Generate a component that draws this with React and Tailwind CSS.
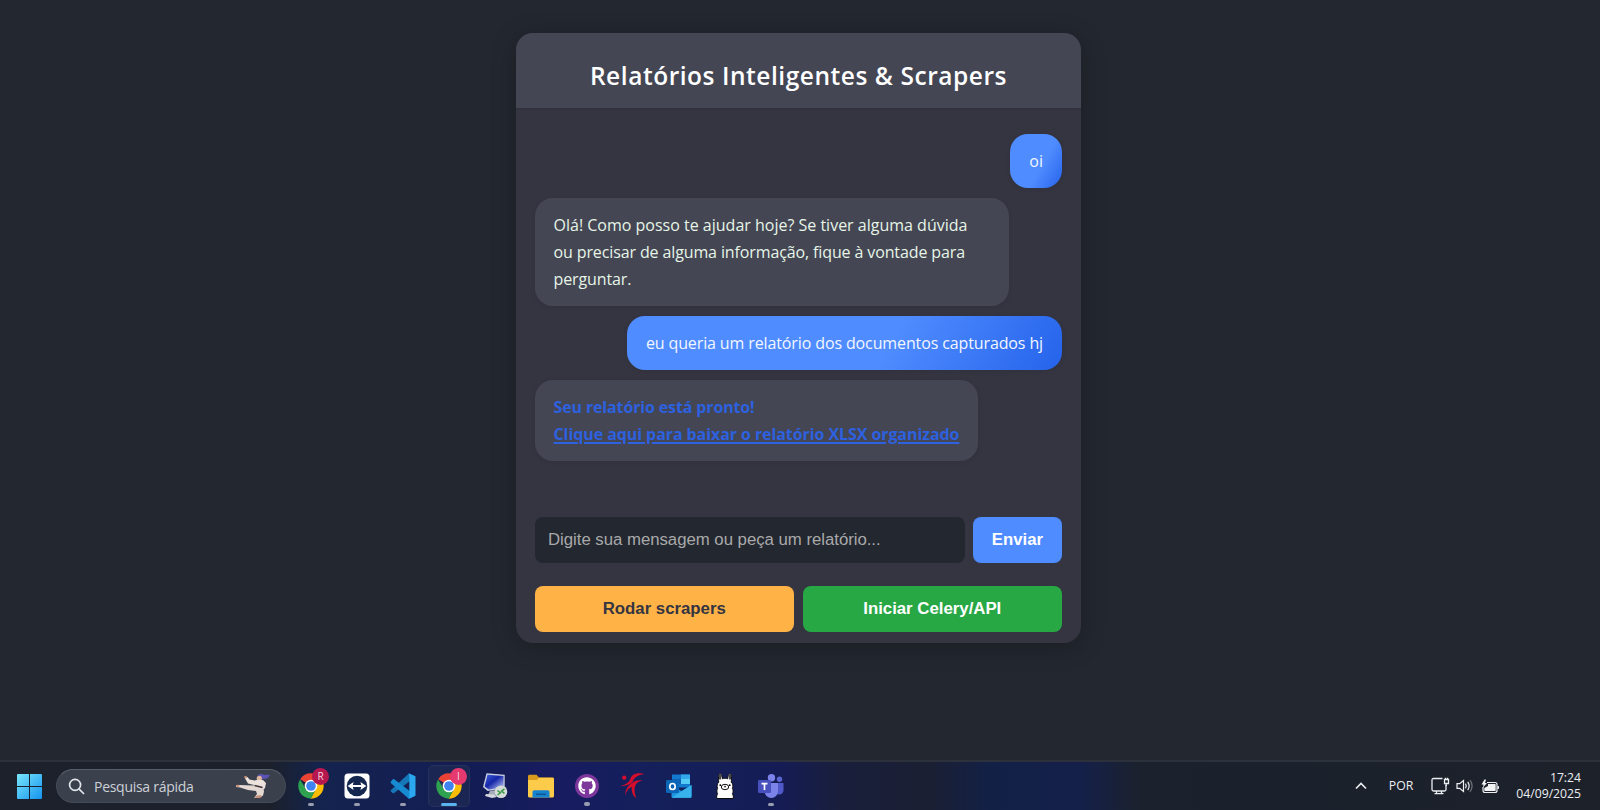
import React from "react";
import { FaGithub } from "react-icons/fa";

function Chrome({ letter, badge }) {
  return (
    <div className="relative h-[26px] w-[26px]">
      <svg viewBox="0 0 26 26" className="h-[26px] w-[26px]">
        <path d="M13 13 2.2 6.2A12.7 12.7 0 0 1 24.3 7.2H13Z" fill="#ea4335" />
        <path d="M24.3 7.2A12.7 12.7 0 0 1 12.6 25.7L18 15.8 13 7.2Z" fill="#fbbc04" />
        <path d="M2 6.6A12.7 12.7 0 0 0 12.6 25.7L18 16 8 16Z" fill="#2fa24f" />
        <circle cx="13" cy="13" r="6.3" fill="#fff" />
        <circle cx="13" cy="13" r="4.8" fill="#3f83f0" />
      </svg>
      <span className={`absolute -top-[5px] left-[14px] flex h-[17px] w-[17px] items-center justify-center rounded-full text-[10px] text-[#f7d3df] ${badge}`}>
        {letter}
      </span>
    </div>
  );
}

function TeamViewer() {
  return (
    <svg viewBox="0 0 26 26" className="h-[26px] w-[26px]">
      <rect x=".5" y=".5" width="25" height="25" rx="3.5" fill="#fff" />
      <circle cx="13" cy="13" r="10.3" fill="#14284f" />
      <path d="m3.6 13 6-4-.8 2.9h8.4L16.4 9l6 4-6 4 .8-2.9H8.8l.8 2.9Z" fill="#fff" />
    </svg>
  );
}

function VsCode() {
  return (
    <svg viewBox="0 0 26 26" className="h-[26px] w-[26px]">
      <path d="M.7 17.2 18.6.8 20 1.2V8L3.8 20.3 3 20.2.8 18.4Z" fill="#1677b8" />
      <path d="M.7 8.800 3.1 6.1l.8-.1L20 18.2v6.6l-1.5.6L.8 10Z" fill="#168bd1" />
      <path d="M19.3.5 25.5 3.2v19.6l-6.2 2.9-.9-.4.9-1.300V2.2l-.9-1.400Z" fill="#2aa7ee" />
    </svg>
  );
}

function RemoteDesktop() {
  return (
    <svg viewBox="0 0 26 26" className="h-[26px] w-[26px]">
      <defs>
        <linearGradient id="screen" x1="0" y1="0" x2="1" y2="1">
          <stop offset="0" stopColor="#3f60dc" />
          <stop offset=".45" stopColor="#1526a8" />
          <stop offset="1" stopColor="#c3d0f6" />
        </linearGradient>
      </defs>
      <path d="m8 18 6-1 1 5-5 2-4-2Z" fill="#a6adba" />
      <path d="m4 21 8 .5 3 2.5-5 1-7-2Z" fill="#d2d6dd" />
      <path d="m4.500.2 18.200 1.500v13.500l-17 2.800L1 14Z" fill="#c9d0df" />
      <path d="m5.500 1.700 16 1.300v11.200L6.600 16.500l-4-3Z" fill="url(#screen)" />
      <circle cx="19" cy="18.800" r="6.300" fill="#d5dbd6" />
      <path d="m15.500 17.500 3 2.300-3 2.200M22.500 15.800l-3 2.300 3 2.300" fill="none" stroke="#3a9a48" strokeWidth="1.5" />
    </svg>
  );
}

function Folder() {
  return (
    <svg viewBox="0 0 26 26" className="h-[26px] w-[26px]">
      <path d="M0 3.200C0 2.300.6 1.700 1.500 1.700h7L11 4.500h13.500c.9 0 1.500.6 1.500 1.500v8H0Z" fill="#d99a1d" />
      <path d="M0 7h9l2-2.300h13.500c.9 0 1.500.6 1.500 1.500V23c0 .9-.6 1.500-1.500 1.500h-23C.6 24.500 0 23.900 0 23Z" fill="#fccb4a" />
      <path d="M4.500 24.500V19c0-1 .8-1.800 1.800-1.800h13.400c1 0 1.800.8 1.800 1.800v5.500Z" fill="#1683d0" />
      <path d="M8 20.500h10v1.500H8Z" fill="#0e5793" />
    </svg>
  );
}

function GitHubDesktop() {
  return (
    <div className="flex h-6 w-6 items-center justify-center rounded-full bg-[#7c369c]">
      <FaGithub className="h-[18px] w-[18px] text-white" />
    </div>
  );
}

function RedFigure() {
  return (
    <svg viewBox="0 0 26 26" className="h-[26px] w-[26px]" fill="#d50d2c">
      <circle cx="4.200" cy="4.600" r="2.200" />
      <path d="M24.500 1C18-.8 12 1 10.500 5.500 9.500 8.800 7.500 10.800.5 13.200c7.500-.7 10.500-2 12.300-4.700C14.200 4.500 17.500 2 24.500 1Z" />
      <path d="M22.500 7.600c-4.500-.8-8 .2-10 2.200C8 12.500 5.500 16 5 22.500 7 17.500 8.500 15 11.700 14c-.2 5 1 8.800 4.800 11.300-2-4-2.500-8.300-1.400-12.300C16.500 9.800 18.500 8.200 22.500 7.600Z" />
    </svg>
  );
}

function Outlook() {
  return (
    <svg viewBox="0 0 26 26" className="h-[26px] w-[26px]">
      <path d="M6 1.500h18v13H6Z" fill="#1279ce" />
      <path d="M15 1.500h9V6h-9Z" fill="#31a9ea" />
      <path d="M15 6h9v5h-9Z" fill="#53cbf4" />
      <path d="M6 6h9v5H6Z" fill="#0d62b5" />
      <path d="M5.500 12 15.500 18 25.500 12v11.500c0 .8-.5 1.300-1.300 1.300H6.800c-.8 0-1.300-.5-1.300-1.300Z" fill="#1b96df" />
      <path d="M25.500 12 6 24.500c.3.200.5.300.8.300h17.400c.8 0 1.300-.5 1.300-1.300Z" fill="#38b2ed" />
      <rect x="0" y="7" width="13" height="13" rx="1.300" fill="#0c66b8" />
      <ellipse cx="6.500" cy="13.500" rx="2.700" ry="3" fill="none" stroke="#fff" strokeWidth="1.700" />
    </svg>
  );
}

function Llama() {
  return (
    <svg viewBox="0 0 26 26" className="h-[26px] w-[26px]">
      <path
        d="M4.800 25.500c-.5-2 .2-3.600.8-4.800-1-1.700-1-3.700 0-5.200-1-2.500-.5-5 1.200-6.300C6.200 5.500 6.300 1 8 .800c1.600 0 2 2.700 2.300 5 1.700-.9 3.700-.9 5.400 0 .3-2.300.7-5 2.300-5 1.700.2 1.800 4.700 1.200 8.400 1.700 1.300 2.200 3.800 1.200 6.300 1 1.500 1 3.500 0 5.200.6 1.200 1.300 2.800.8 4.800Z"
        fill="#fff"
        stroke="#0b0b0b"
        strokeWidth="1"
      />
      <path d="M8 2v4.500M18 2v4.500" stroke="#111" strokeWidth="1.500" />
      <ellipse cx="13" cy="14" rx="3.700" ry="2.700" fill="none" stroke="#111" strokeWidth="1" />
      <circle cx="8.300" cy="12.200" r=".9" />
      <circle cx="17.700" cy="12.200" r=".9" />
      <path d="m12 13 1 .7 1-.7M13 13.700v1" fill="none" stroke="#111" strokeWidth=".8" />
    </svg>
  );
}

function Teams() {
  return (
    <svg viewBox="0 0 26 26" className="h-[26px] w-[26px]">
      <circle cx="21.500" cy="6.300" r="2.700" fill="#5b65cf" />
      <circle cx="13.500" cy="4.700" r="3.700" fill="#7b83eb" />
      <path d="M17 10h7.500c.6 0 1 .4 1 1v6.500a4.500 4.500 0 0 1-8.500 1.500Z" fill="#5059c9" />
      <path d="M7.500 10H19c.6 0 1 .4 1 1v7.300a6.700 6.700 0 0 1-13.400 0V11c0-.6.3-1 .9-1Z" fill="#7b83eb" />
      <rect x="0" y="7" width="13" height="13" rx="1.300" fill="#4750bd" />
      <path d="M3.500 10.700h6M6.500 10.700v6.200" stroke="#fff" strokeWidth="1.700" />
    </svg>
  );
}

function Karateka() {
  return (
    <svg viewBox="0 0 36 26" className="h-[26px] w-9">
      <path d="M22.500 3c2-3 5-2 7-1 2-.3 3.500-.5 5.500.3-1.500 2.700-4 4-6.500 3.700L24 6Z" fill="#5b50b3" />
      <circle cx="24.300" cy="5.300" r="2.600" fill="#e0b49d" />
      <path d="m9.500 4.500 3-.5 2 2.500 5 1 3.500-.8 5 .3 3 3-1 5-3 3h-6l-2-6-6-1.500Z" fill="#ece3dc" />
      <path d="m1 12.500 4-.5 13 .5 6-1 4 3 1 4-1 4-3 2-6 .5 3-4-1-3-8-1-8-2.500-4-.5Z" fill="#e4d9d2" />
      <path d="m19.500 12.500 8 2" stroke="#42343b" strokeWidth="1.400" />
      <path d="m1 12 3-.3.500 2L1.500 14ZM9 3.500l2.500-.7.7 2L10 5.500ZM20 23l6-1 .5 2.500-6 .5ZM28 8.500l3 3" fill="#c99078" />
    </svg>
  );
}

const apps = [
  { icon: <Chrome letter="R" badge="bg-[#b5184f]" />, mark: "small" },
  { icon: <TeamViewer />, mark: "small" },
  { icon: <VsCode />, mark: "small" },
  { icon: <Chrome letter="I" badge="bg-[#e5396f]" />, mark: "active" },
  { icon: <RemoteDesktop /> },
  { icon: <Folder /> },
  { icon: <GitHubDesktop />, mark: "small" },
  { icon: <RedFigure /> },
  { icon: <Outlook /> },
  { icon: <Llama /> },
  { icon: <Teams />, mark: "small" },
];

function TaskbarApp({ icon, mark }) {
  const active = mark === "active";
  return (
    <div className="flex w-[46px] justify-center">
      <div className={`flex h-[42px] w-[42px] flex-col items-center rounded-[5px] border pt-[7px] ${active ? "border-[#26325c] bg-[#1b2652]" : "border-transparent"}`}>
        <div className="flex h-[26px] items-center">{icon}</div>
        {mark && <div className={`mt-1 h-1 rounded-full ${active ? "w-4 bg-[#58b3ee]" : "w-[6px] bg-[#989daf]"}`} />}
      </div>
    </div>
  );
}

function Taskbar() {
  return (
    <footer className="flex h-[50px] items-start border-t-2 border-[#2c313c] bg-[linear-gradient(90deg,#1c212b_0px,#1b202b_270px,#14234e_320px,#131c55_480px,#171c60_560px,#14205a_660px,#151c55_780px,#191f3b_840px,#1a1f33_930px,#132046_990px,#14204a_1080px,#1b212d_1140px,#1c212a_1600px)]">
      <svg viewBox="0 0 25 25" className="mt-3 ml-[17px] h-[25px] w-[25px]">
        <defs>
          <linearGradient id="win" x1="0" y1="0" x2="1" y2="1">
            <stop offset="0" stopColor="#78e6fb" />
            <stop offset="1" stopColor="#1594ef" />
          </linearGradient>
        </defs>
        <path d="M1 0h11v12H0V1Q0 0 1 0ZM13 0h11q1 0 1 1v11H13ZM0 13h12v12H1q-1 0-1-1ZM13 13h12v11q0 1-1 1H13Z" fill="url(#win)" />
      </svg>
      <div className="mt-[7px] ml-[14px] flex h-[34px] w-[230px] items-center rounded-full border border-[#454c58] border-t-[#59606c] bg-[#3a404c] pl-[11px]">
        <svg viewBox="0 0 18 18" className="h-[17px] w-[17px]" fill="none" stroke="#e1e4e9" strokeWidth="1.800" strokeLinecap="round">
          <circle cx="7.500" cy="7.300" r="5.800" />
          <path d="m11.800 11.700 4.700 4.700" />
        </svg>
        <span className="ml-[9px] w-[141px] text-[14px] tracking-[-0.28px] text-[#cdd1d8]">Pesquisa rápida</span>
        <Karateka />
      </div>
      <div className="mt-[3px] ml-[2px] flex">
        {apps.map((app, i) => (
          <TaskbarApp key={i} {...app} />
        ))}
      </div>
      <div className="ml-auto flex h-12 items-center pr-[19px] text-[#eceef2]">
        <svg viewBox="0 0 12 8" className="mr-[22px] h-2 w-3" fill="none" stroke="currentColor" strokeWidth="1.600">
          <path d="m1 6.500 5-5 5 5" />
        </svg>
        <span className="mr-[18px] text-[12.3px]">POR</span>
        <svg viewBox="0 0 19 18" className="mr-[6px] h-[18px] w-[19px]" fill="none" stroke="currentColor" strokeWidth="1.300">
          <path d="M11.500 1.500H2.500Q1 1.500 1 3v9.500Q1 14 2.500 14h11q1.500 0 1.500-1.500V8M5.500 14v2.500M10.500 14v2.500M3.500 16.700h9" />
          <path d="M13.500 2.500h4v4h-4ZM14.500 2.500V.8M16.500 2.500V.8M15.200 6.500v2.500" />
        </svg>
        <svg viewBox="0 0 18 16" className="mr-[7px] h-4 w-[18px]" fill="none" stroke="currentColor" strokeWidth="1.200">
          <path d="M1 5.700h2.700L7.500 2.500v11L3.700 10.300H1ZM9.500 5.700q1.500 2.300 0 4.600M11.700 3.800q2.900 4.200 0 8.400" />
          <path d="M14 2.200q4.200 5.800 0 11.600" opacity=".4" />
        </svg>
        <svg viewBox="0 0 18 15" className="h-[15px] w-[18px]">
          <path d="M6 3.500h8Q16 3.500 16 5.500v6q0 2-2 2H4q-2 0-2-2V8" fill="none" stroke="#eceef2" strokeWidth="1.200" />
          <path d="M7 5h7q.7 0 .7.700v5.600q0 .7-.7.700H4q-.7 0-.7-.7V9L7 7ZM16.500 7h.7q.8 0 .8.800v1.400q0 .8-.8.8h-.7Z" fill="#f2f3f5" />
          <path d="M3.500.500.500 5.500h2L2 8.500 6 4H4L5 .500Z" fill="#f2f3f5" />
        </svg>
        <div className="ml-[17px] text-right text-[12.2px] leading-[16.5px]">
          <div>17:24</div>
          <div>04/09/2025</div>
        </div>
      </div>
    </footer>
  );
}

const bubble = "rounded-[18px] px-[19px] pt-[14.5px] pb-[12.5px] shadow-[0_1px_5px_#00000012]";
const userBubble = `${bubble} self-end bg-[linear-gradient(120deg,#4f8cff_60%,#2563eb_100%)] text-[#f2f6ff]`;
const botBubble = `${bubble} self-start bg-[#444654]`;

export default function App() {
  return (
    <div className="flex h-[810px] w-[1600px] flex-col overflow-hidden bg-[#23272f] font-['Open_Sans','Noto_Sans',sans-serif]">
      <main className="flex flex-1 flex-col items-center pt-[33px] pr-[3px]">
        <section className="flex h-[610px] w-[565px] flex-col overflow-hidden rounded-[17px] bg-[#343541] shadow-[0_4px_24px_#00000040]">
          <header className="flex h-[75px] shrink-0 items-center justify-center bg-[#444654] pt-3 shadow-[0_1px_2px_#00000018]">
            <h1 className="text-[24.5px] font-semibold tracking-[0.54px] text-white">Relatórios Inteligentes &amp; Scrapers</h1>
          </header>
          <div className="flex flex-1 flex-col gap-[10px] pt-[25.5px] pr-[19px] pl-[18.5px] text-[16px] leading-[27px]">
            <div className={userBubble}>oi</div>
            <div className={`${botBubble} w-[474px] text-[#e6f5e6]`}>
              Olá! Como posso te ajudar hoje? Se tiver alguma dúvida{" "}
              <span className="tracking-[-0.12px]">ou precisar de alguma informação, fique à vontade para perguntar.</span>
            </div>
            <div className={`${userBubble} tracking-[-0.12px]`}>eu queria um relatório dos documentos capturados hj</div>
            <div className={`${botBubble} font-bold tracking-[-0.08px] text-[#2d61df]`}>
              <p className="tracking-[-0.14px]">Seu relatório está pronto!</p>
              <a className="underline decoration-[1.5px] underline-offset-2">Clique aqui para baixar o relatório XLSX organizado</a>
            </div>
          </div>
          <div className="pr-[19px] pb-[11px] pl-[18.5px] font-['Liberation_Sans',Arial,sans-serif] text-[16.8px]">
            <div className="flex h-[46px] gap-[8.5px]">
              <input
                className="min-w-0 flex-1 rounded-[8px] bg-[#23272f] px-[13.5px] tracking-[-0.03px] text-white placeholder:text-[#a9a9aa] placeholder:opacity-100"
                placeholder="Digite sua mensagem ou peça um relatório..."
              />
              <button className="w-[89px] rounded-[8px] bg-[#4f8cff] font-bold text-white">Enviar</button>
            </div>
            <div className="mt-[23px] flex h-[46px] gap-[8.5px]">
              <button className="flex-1 rounded-[8px] bg-[#ffb347] font-bold text-[#343541]">Rodar scrapers</button>
              <button className="flex-1 rounded-[8px] bg-[#28a745] font-bold text-white">Iniciar Celery/API</button>
            </div>
          </div>
        </section>
      </main>
      <Taskbar />
    </div>
  );
}
